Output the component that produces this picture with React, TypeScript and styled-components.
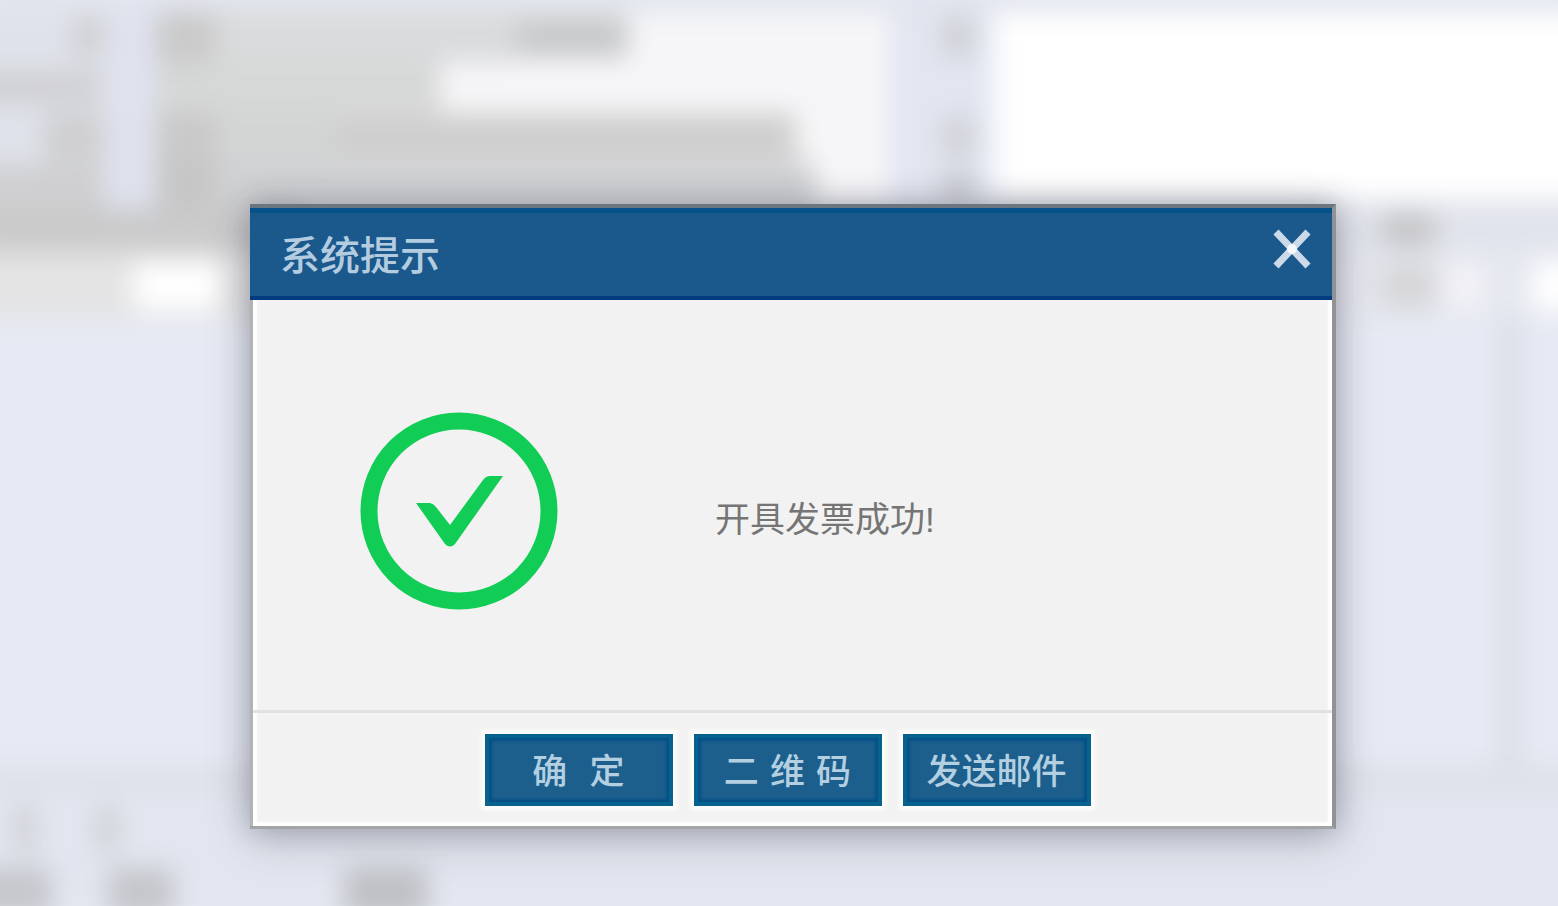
import React from "react";
import styled, { createGlobalStyle } from "styled-components";

const GlobalStyle = createGlobalStyle`
  *, *::before, *::after { box-sizing: border-box; }
  body {
    margin: 0;
    background: #e5e9f3;
    font-family: "Liberation Sans", "Noto Sans CJK SC", sans-serif;
  }
`;

/* The form behind and the dialog in front share one grid cell. */
const Page = styled.div`
  display: grid;
  grid-template-columns: minmax(0, 1fr);
  min-height: 100vh;
  overflow: hidden;
`;

/* Runs 30px past both sides so the blur does not fade at the window edge. */
const Backdrop = styled.div`
  grid-area: 1 / 1;
  min-width: 0;
  margin: 0 -30px;
  display: flex;
  flex-direction: column;
  filter: blur(13px);
`;

const FormArea = styled.div`
  display: flex;
  height: 208px;
  padding-top: 12px;
  background: #dfe2ea;
`;

const Column = styled.div<{ $width?: number; $bg?: string; $gapBelow?: number }>`
  display: flex;
  flex-direction: column;
  flex: ${(p) => (p.$width ? `0 0 ${p.$width}px` : "1 1 0")};
  min-width: 0;
  margin-bottom: ${(p) => p.$gapBelow ?? 0}px;
  background: ${(p) => p.$bg ?? "transparent"};
`;

const FormRow = styled.div`
  display: flex;
  align-items: center;
  flex: 0 0 50px;
`;

const Smear = styled.span<{ $left?: number; $width: number; $height?: number; $tone?: string }>`
  flex: none;
  width: ${(p) => p.$width}px;
  height: ${(p) => p.$height ?? 42}px;
  margin-left: ${(p) => p.$left ?? 0}px;
  background: ${(p) => p.$tone ?? "#cfcfd1"};
`;

const Band = styled.div`
  flex: 0 0 44px;
  display: flex;
  align-items: center;
  padding-right: 152px;
  background: linear-gradient(90deg, #cacacb 0 330px, #e1e4ec 330px);
`;

const TableRow = styled.div`
  flex: 0 0 68px;
  display: flex;
  align-items: center;
  background: linear-gradient(90deg, #e4e4e5 0 330px, #e6e8f0 330px);
`;

const Spacer = styled.div`
  flex: 1;
`;

const TableBody = styled.div`
  flex: 0 0 468px;
  display: flex;
  justify-content: flex-end;
  background: #e6eaf4;
  border-bottom: 20px solid #dddfe7;
`;

const ColumnRule = styled.div`
  width: 24px;
  margin-right: 66px;
  background: #dadee7;
`;

const Footnotes = styled.div`
  flex: 1 0 118px;
  display: flex;
  flex-direction: column;
  gap: 14px;
  padding-top: 16px;
  background: #e2e6f0;
`;

const NoteRow = styled.div`
  display: flex;
  align-items: center;
`;

const Overlay = styled.div`
  grid-area: 1 / 1;
  z-index: 1;
  padding: 204px 222px 76px 250px;
`;

const Dialog = styled.section`
  display: flex;
  flex-direction: column;
  border-style: solid;
  border-width: 4px 4px 3px 0;
  border-color: #6c7681 #909295 #a2a5a7 #b0b4b4;
  background: #f2f2f2;
  box-shadow:
    0 10px 40px rgba(60, 60, 66, 0.28),
    0 -2px 26px rgba(50, 52, 80, 0.26);
`;

const Header = styled.header`
  display: flex;
  align-items: center;
  justify-content: space-between;
  height: 92px;
  padding: 0 20px 0 30px;
  background: #1b598c;
  border-top: 5px solid #05528a;
  border-bottom: 4px solid #003b80;
`;

const Title = styled.h1`
  margin: 0;
  padding-top: 2px;
  font-size: 40px;
  line-height: 48px;
  font-weight: 500;
  color: #b4cce0;
`;

const CloseButton = styled.button`
  display: flex;
  width: 40px;
  height: 52px;
  padding: 0;
  border: 0;
  background: none;
  cursor: pointer;
`;

const Content = styled.div`
  border-left: 3px solid #b0b4b4;
  box-shadow:
    inset 4px 0 2px #fff,
    inset -4px -4px 3px #fff;
`;

const Body = styled.div`
  display: flex;
  align-items: center;
  gap: 156px;
  min-height: 410px;
  padding: 12px 24px 0 106px;
`;

const Message = styled.p`
  margin: 0;
  padding-top: 18px;
  font-size: 35px;
  line-height: 48px;
  color: #757575;
`;

const Footer = styled.footer`
  display: flex;
  justify-content: center;
  gap: 21px;
  padding: 21px 10px 20px 0;
  border-top: 3px solid #e1e1e1;
`;

const ActionButton = styled.button`
  flex: 0 0 188px;
  height: 72px;
  padding: 4px 0 0;
  border: 4px solid #07628e;
  background: #1c5f8d;
  box-shadow:
    inset 0 0 3px 3px #055187,
    0 0 4px 4px #fefdfb;
  color: #b3cfe0;
  font-family: "DejaVu Sans", "Noto Sans CJK SC", sans-serif;
  font-size: 35px;
  line-height: 48px;
  font-weight: 500;
  white-space: pre;
  cursor: pointer;
`;

const SuccessIcon = () => (
  <svg width="200" height="200" viewBox="0 0 200 200" role="img" aria-label="成功">
    <circle cx="100" cy="100" r="90" fill="none" stroke="#12cd55" strokeWidth="17" />
    <path
      d="M57 92 H71 Q75 93 77 96 L91 114 L124 69 Q127 65 131 65 H144 L96 133 Q91 138 86 133 Z"
      fill="#12cd55"
    />
  </svg>
);

const CloseIcon = () => (
  <svg width="40" height="40" viewBox="0 0 40 40" aria-hidden="true">
    <path d="M4 3 L36 37 M36 3 L4 37" stroke="#cbd9e8" strokeWidth="7" />
    <circle cx="20" cy="20" r="5" fill="#f4f8fc" />
  </svg>
);

const actions = ["确  定", "二 维 码", "发送邮件"];

export default function App() {
  return (
    <>
      <GlobalStyle />
      <Page>
        <Backdrop aria-hidden="true">
          <FormArea>
            <Column $width={140}>
              <FormRow><Smear $left={104} $width={28} /></FormRow>
              <FormRow><Smear $width={130} $height={30} /></FormRow>
              <FormRow><Smear $left={74} $width={60} $height={50} /></FormRow>
              <FormRow><Smear $width={134} $height={44} /></FormRow>
            </Column>
            <Column $width={46} $bg="#dfe3ef" />
            <Column $width={734} $bg="#f6f6f8">
              <FormRow>
                <Smear $width={60} $height={50} $tone="#cacaca" />
                <Smear $width={300} $height={50} $tone="#dadbdc" />
                <Smear $width={112} $tone="#c8c9ca" />
              </FormRow>
              <FormRow>
                <Smear $width={284} $height={50} $tone="#d6d7d7" />
              </FormRow>
              <FormRow>
                <Smear $width={60} $height={50} $tone="#c9c9c9" />
                <Smear $width={120} $height={50} $tone="#d3d4d4" />
                <Smear $width={460} $height={46} $tone="#cecece" />
              </FormRow>
              <FormRow>
                <Smear $width={60} $height={50} $tone="#c6c6c6" />
                <Smear $width={600} $height={50} $tone="#d0d1d3" />
              </FormRow>
            </Column>
            <Column $width={104} $bg="#e2e6f1">
              <FormRow><Smear $left={52} $width={32} $tone="#d0d1d6" /></FormRow>
              <FormRow />
              <FormRow><Smear $left={52} $width={32} $tone="#d0d1d6" /></FormRow>
              <FormRow><Smear $left={52} $width={32} $height={30} $tone="#c8c9ce" /></FormRow>
            </Column>
            <Column $bg="#ffffff" $gapBelow={8} />
          </FormArea>
          <Band>
            <Spacer />
            <Smear $width={56} $height={34} $tone="#c6c6c8" />
          </Band>
          <TableRow>
            <Smear $left={164} $width={86} $height={48} $tone="#ffffff" />
            <Spacer />
            <Smear $width={56} $height={44} $tone="#d6d6d8" />
            <Smear $left={8} $width={40} $height={50} $tone="#f2f2f6" />
            <Smear $left={48} $width={56} $height={50} $tone="#ffffff" />
          </TableRow>
          <TableBody>
            <ColumnRule />
          </TableBody>
          <Footnotes>
            <NoteRow>
              <Smear $left={42} $width={26} $height={50} $tone="#d2d4d8" />
              <Smear $left={56} $width={26} $height={50} $tone="#d2d4d8" />
            </NoteRow>
            <NoteRow>
              <Smear $width={82} $height={50} $tone="#c6c7cc" />
              <Smear $left={56} $width={66} $height={50} $tone="#c5c6ca" />
              <Smear $left={170} $width={84} $height={50} $tone="#bfc0c4" />
            </NoteRow>
          </Footnotes>
        </Backdrop>

        <Overlay>
          <Dialog role="dialog" aria-modal="true" aria-labelledby="dialog-title">
            <Header>
              <Title id="dialog-title">系统提示</Title>
              <CloseButton type="button" aria-label="关闭">
                <CloseIcon />
              </CloseButton>
            </Header>
            <Content>
              <Body>
                <SuccessIcon />
                <Message>开具发票成功!</Message>
              </Body>
              <Footer>
                {actions.map((label) => (
                  <ActionButton type="button" key={label}>
                    {label}
                  </ActionButton>
                ))}
              </Footer>
            </Content>
          </Dialog>
        </Overlay>
      </Page>
    </>
  );
}
